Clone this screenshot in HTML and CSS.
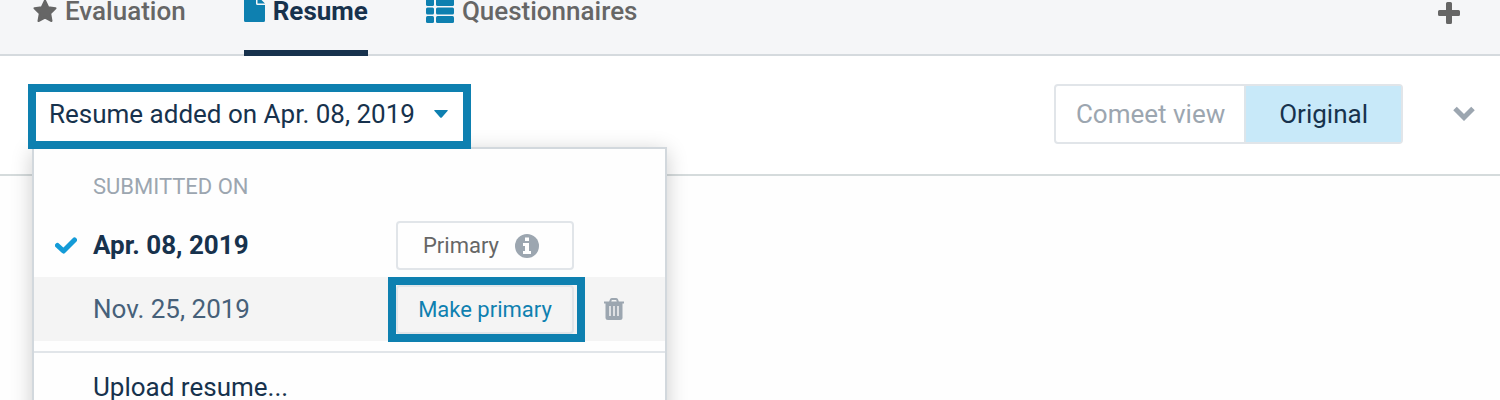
FILE: index.html
```
<!DOCTYPE html>
<html lang="en">
<head>
    <meta charset="UTF-8">
    <meta name="viewport" content="width=device-width, initial-scale=1.0">
    <title>Candidate resume</title>
    <link rel="stylesheet" href="styles.css">
</head>
<body>

    <nav class="tabs">
        <a class="tab" href="#evaluation">
            <svg class="icon-star" viewBox="0 0 24 24"><path d="M12 1.500l3.200 6.800 7.300 1-5.300 5.200 1.300 7.500L12 18.500l-6.500 3.500 1.300-7.500L1.500 9.300l7.300-1z"/></svg>
            Evaluation
        </a>
        <a class="tab active" href="#resume">
            <svg class="icon-file" viewBox="0 0 21 26"><path d="M1.500 0H12v7.500Q12 9 13.500 9H21v15.500Q21 26 19.500 26h-18Q0 26 0 24.500v-23Q0 0 1.500 0zM13.500 0L21 7.500h-7.500z"/></svg>
            Resume
        </a>
        <a class="tab" href="#questionnaires">
            <svg class="icon-list" viewBox="0 0 28 24">
                <rect x="0" y="0" width="8" height="7" rx="1.500"/><rect x="10" y="0" width="18" height="7" rx="1.500"/>
                <rect x="0" y="8.500" width="8" height="7" rx="1.500"/><rect x="10" y="8.500" width="18" height="7" rx="1.500"/>
                <rect x="0" y="17" width="8" height="7" rx="1.500"/><rect x="10" y="17" width="18" height="7" rx="1.500"/>
            </svg>
            Questionnaires
        </a>
        <button class="add-btn" aria-label="Add">
            <svg viewBox="0 0 22 22"><path d="M9.500 0h3Q14 0 14 1.500V8h6.500Q22 8 22 9.500v3Q22 14 20.500 14H14v6.500Q14 22 12.500 22h-3Q8 22 8 20.500V14H1.500Q0 14 0 12.500v-3Q0 8 1.500 8H8V1.500Q8 0 9.500 0z"/></svg>
        </button>
    </nav>

    <div class="toolbar">
        <div class="dropdown">
            <button class="dropdown-btn">
                Resume added on Apr. 08, 2019
                <svg class="caret" viewBox="0 0 14 8"><path d="M1 0h12q1.500 0 .5 1L8 7.300q-1 1-2 0L.5 1Q-.5 0 1 0z"/></svg>
            </button>

            <div class="menu">
                <div class="menu-title">SUBMITTED ON</div>
                <div class="menu-row current">
                    <svg class="check" viewBox="0 0 22 17"><path d="M2.500 8.500l6 5.500L19.500 3"/></svg>
                    <span class="date">Apr. 08, 2019</span>
                    <button class="row-btn primary">
                        Primary
                        <svg class="info" viewBox="0 0 24 24">
                            <circle cx="12" cy="12" r="12"/>
                            <path d="M10 3.500h4v3.500h-4zM8 9h6v8h2v3H8v-3h2v-5H8z"/>
                        </svg>
                    </button>
                </div>
                <div class="menu-row hover">
                    <span class="date">Nov. 25, 2019</span>
                    <button class="row-btn make-primary">Make primary</button>
                    <button class="delete-btn" aria-label="Delete">
                        <svg viewBox="0 0 20 22">
                            <path class="lid" d="M6 4l1-2.500Q7.300 1 8 1h4q.7 0 1 .5L14 4M0 4.500h20"/>
                            <path d="M1.500 5h17v14.500q0 2.500-2.500 2.500h-12Q1.500 22 1.500 19.500z"/>
                            <path class="slot" d="M6 8v10M10 8v10M14 8v10"/>
                        </svg>
                    </button>
                </div>
                <a class="upload" href="#upload">Upload resume...</a>
            </div>
        </div>

        <div class="view-switch">
            <button>Comeet view</button>
            <button class="selected">Original</button>
        </div>
        <button class="more-btn" aria-label="More">
            <svg viewBox="0 0 22 15"><path d="M2 2.500l9 9 9-9"/></svg>
        </button>
    </div>

</body>
</html>
```

FILE: styles.css
```
* {
    box-sizing: border-box;
}
body {
    margin: 0;
    min-height: 100vh;
    overflow: hidden;
    font-family: Roboto, Arial, sans-serif;
    font-size: 26px;
    line-height: 30px;
    color: #17324d;
    background-color: #fefefe;
}
button {
    font: inherit;
    color: inherit;
    background: none;
    border: none;
    padding: 0;
    cursor: pointer;
}
a {
    color: inherit;
    text-decoration: none;
}
svg {
    display: block;
    flex: none;
    fill: currentColor;
}

/* tabs */
.tabs {
    display: flex;
    align-items: flex-start;
    gap: 58px;
    padding: 0 40px 0 33px;
    background-color: #f5f6f8;
    border-bottom: 2px solid #d5dade;
}
.tab {
    display: flex;
    align-items: center;
    gap: 8px;
    height: 56px;
    margin-bottom: -2px;
    padding-bottom: 28px;
    line-height: 22px;
    font-weight: 500;
    color: #666;
    border-bottom: 6px solid transparent;
}
.tab.active {
    font-weight: 700;
    color: #17324d;
    border-bottom-color: #17324d;
}
.icon-star {
    width: 24px;
    height: 24px;
    stroke: currentColor;
    stroke-width: 2;
    stroke-linejoin: round;
}
.icon-file {
    width: 21px;
    height: 26px;
    color: #0e80b0;
    margin-bottom: 4px;
}
.icon-list {
    width: 28px;
    height: 24px;
    color: #0e80b0;
}
.add-btn {
    margin-left: auto;
    padding-top: 2px;
    color: #666;
}
.add-btn svg {
    width: 22px;
    height: 22px;
}

/* toolbar */
.toolbar {
    display: flex;
    align-items: flex-start;
    padding: 28px 25px 25px 28px;
    background-color: #fff;
    border-bottom: 2px solid #d5dbdc;
}
.dropdown {
    position: relative;
    margin-right: auto;
}
.dropdown-btn {
    position: relative;
    z-index: 2;
    display: flex;
    align-items: center;
    gap: 19px;
    height: 65px;
    padding: 0 15px 6px 13px;
    background-color: #fff;
    border: 8px solid #0e80b0;
}
.caret {
    width: 14px;
    height: 8px;
    color: #0e80b0;
}
.view-switch {
    display: flex;
    height: 60px;
    border: 2px solid #e1e5e9;
    border-radius: 4px;
}
.view-switch button {
    padding: 0 19px 0 20px;
    color: #9ca6b0;
}
.view-switch .selected {
    padding: 0 33px;
    color: #17324d;
    background-color: #c8e9f9;
    border-left: 2px solid #dde5ea;
}
.more-btn {
    margin: 22px 0 0 50px;
    color: #9ca6b0;
}
.more-btn svg {
    width: 22px;
    height: 15px;
    fill: none;
    stroke: currentColor;
    stroke-width: 5;
}

/* resume menu */
.menu {
    position: absolute;
    top: 63px;
    left: 4px;
    z-index: 1;
    width: 635px;
    padding-bottom: 20px;
    background-color: #fefefe;
    border: 2px solid #d2d8dd;
    box-shadow: 0 4px 20px rgba(0, 0, 0, 0.2);
}
.menu-title {
    padding: 23px 59px 11px;
    font-size: 22px;
    color: #9ca6b0;
}
.menu-row {
    display: grid;
    grid-template-columns: 59px 303px 178px 1fr;
    align-items: center;
    height: 64px;
}
.menu-row.hover {
    background-color: #f4f4f4;
}
.check {
    width: 22px;
    height: 17px;
    margin-left: 21px;
    fill: none;
    stroke: #149bd7;
    stroke-width: 5;
    stroke-linecap: round;
    stroke-linejoin: round;
}
.date {
    grid-column: 2;
    color: #466079;
}
.current .date {
    font-weight: 700;
    color: #17324d;
}
.row-btn {
    position: relative;
    display: flex;
    align-items: center;
    justify-content: center;
    gap: 16px;
    height: 49px;
    padding-top: 2px;
    font-size: 22px;
    color: #666;
    border: 2px solid #e1e5e9;
    border-radius: 4px;
}
.primary {
    padding-right: 8px;
}
.make-primary {
    color: #0e80b0;
}
.make-primary::after {
    content: "";
    position: absolute;
    inset: -10px -13px -10px -10px;
    border: 8px solid #0e80b0;
}
.info {
    width: 24px;
    height: 24px;
    color: #9ca6b0;
}
.info path {
    fill: #fff;
}
.delete-btn {
    justify-self: start;
    margin-left: 30px;
    color: #9ca6b0;
}
.delete-btn svg {
    width: 20px;
    height: 22px;
}
.delete-btn .lid {
    fill: none;
    stroke: currentColor;
    stroke-width: 2;
}
.delete-btn .slot {
    stroke: #f4f4f4;
    stroke-width: 1.5;
}
.upload {
    display: block;
    margin-top: 10px;
    padding: 19px 59px;
    border-top: 2px solid #e1e5e9;
}
```
